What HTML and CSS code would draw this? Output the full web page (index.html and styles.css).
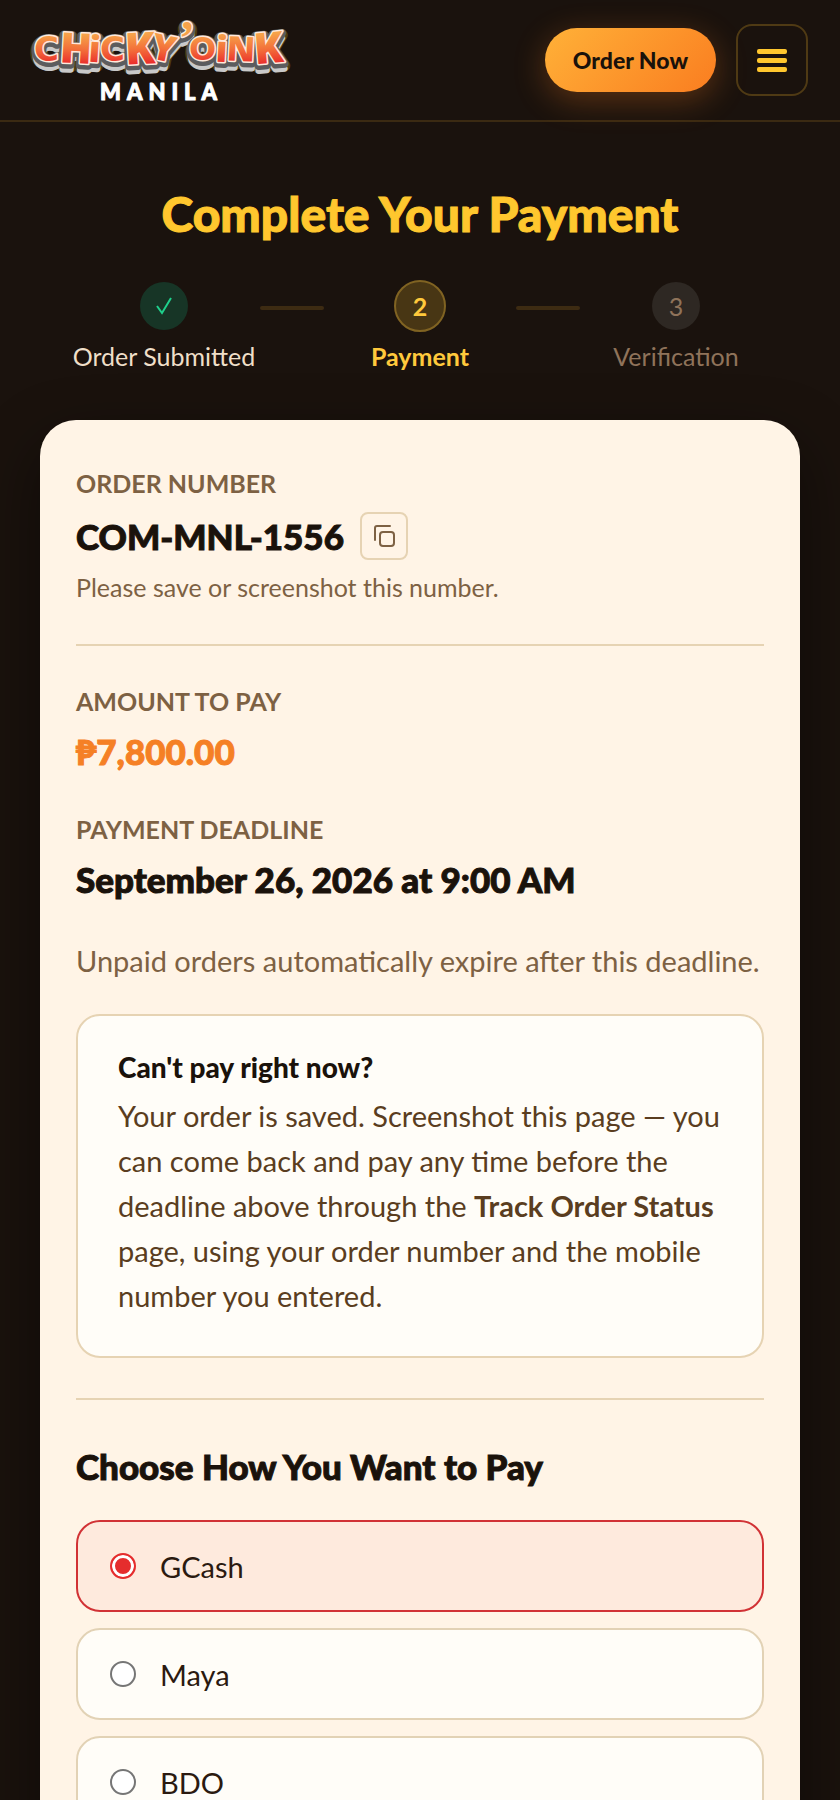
FILE: index.html
```
<!DOCTYPE html>
<html lang="en">
<head>
    <meta charset="UTF-8">
    <meta name="viewport" content="width=device-width, initial-scale=1.0">
    <title>Complete Your Payment - Chicky'Oink Manila</title>
    <link rel="stylesheet" href="styles.css">
</head>
<body>
    <header class="site-header">
        <a class="logo" href="#" aria-label="Chicky'Oink Manila">
            <svg width="256" height="80" viewBox="0 0 256 80">
                <defs>
                    <linearGradient id="flame" x1="0" y1="14" x2="0" y2="44" gradientUnits="userSpaceOnUse">
                        <stop offset="0" stop-color="#f6a34a"/>
                        <stop offset="0.5" stop-color="#f3703a"/>
                        <stop offset="1" stop-color="#ea2c2b"/>
                    </linearGradient>
                    <g id="wordmark">
                        <text class="round" x="2" y="41" font-size="34">C</text>
                        <text x="28" y="43" font-size="42" transform="rotate(3 42 28)">H</text>
                        <text x="57" y="42" font-size="36" transform="rotate(4 62 28)">i</text>
                        <text class="round" x="68" y="41" font-size="34">C</text>
                        <text x="93" y="44" font-size="44" transform="rotate(-3 108 28)">K</text>
                        <text x="120" y="41" font-size="36" transform="rotate(12 133 28)">Y</text>
                        <text class="tick" x="147" y="34" font-size="48">’</text>
                        <text class="round" x="157" y="40" font-size="32">O</text>
                        <text x="184" y="42" font-size="36" transform="rotate(3 191 28)">i</text>
                        <text x="195" y="41" font-size="34" transform="rotate(3 208 28)">N</text>
                        <text x="222" y="43" font-size="43" transform="rotate(-5 236 28)">K</text>
                    </g>
                </defs>
                <use class="logo-glow" href="#wordmark" y="4"/>
                <use class="logo-depth" href="#wordmark" y="7"/>
                <use class="logo-edge" href="#wordmark" y="2"/>
                <use class="logo-rim" href="#wordmark"/>
                <use class="logo-fill" href="#wordmark"/>
                <text class="logo-city" x="68" y="80">MANILA</text>
            </svg>
        </a>
        <div class="header-actions">
            <a class="order-btn" href="#">Order Now</a>
            <button class="menu-btn" type="button" aria-label="Open menu">
                <span></span>
                <span></span>
                <span></span>
            </button>
        </div>
    </header>

    <main class="page">
        <h1 class="page-title">Complete Your Payment</h1>

        <ol class="steps">
            <li class="step done">
                <span class="step-dot">
                    <svg width="24" height="24" viewBox="0 0 24 24"><path d="M5 12l5 7L19 4"/></svg>
                </span>
                <span class="step-label">Order Submitted</span>
            </li>
            <li class="step-line" aria-hidden="true"></li>
            <li class="step active" aria-current="step">
                <span class="step-dot">2</span>
                <span class="step-label">Payment</span>
            </li>
            <li class="step-line" aria-hidden="true"></li>
            <li class="step">
                <span class="step-dot">3</span>
                <span class="step-label">Verification</span>
            </li>
        </ol>

        <section class="card">
            <p class="label">ORDER NUMBER</p>
            <div class="order-row">
                <strong class="order-number">COM-MNL-1556</strong>
                <button class="copy-btn" type="button" aria-label="Copy order number">
                    <svg width="24" height="24" viewBox="0 0 24 24">
                        <rect x="8" y="8" width="14" height="14" rx="3"/>
                        <path d="M3 16V4a2 2 0 0 1 2-2h13"/>
                    </svg>
                </button>
            </div>
            <p class="caption">Please save or screenshot this number.</p>

            <hr class="divider">

            <div class="detail">
                <p class="label">AMOUNT TO PAY</p>
                <p class="value amount">₱7,800.00</p>
            </div>
            <div class="detail">
                <p class="label">PAYMENT DEADLINE</p>
                <p class="value">September 26, 2026 at 9:00 AM</p>
            </div>
            <p class="expiry">Unpaid orders automatically expire after this deadline.</p>

            <div class="notice">
                <h2 class="notice-title">Can't pay right now?</h2>
                <p>Your order is saved. Screenshot this page — you can come back and pay any time before the deadline above through the <strong>Track Order Status</strong> page, using your order number and the mobile number you entered.</p>
            </div>

            <hr class="divider">

            <h2 class="section-title" id="methods">Choose How You Want to Pay</h2>
            <div class="methods" role="radiogroup" aria-labelledby="methods">
                <label class="method selected">
                    <input type="radio" name="method" value="gcash" checked>
                    <span>GCash</span>
                </label>
                <label class="method">
                    <input type="radio" name="method" value="maya">
                    <span>Maya</span>
                </label>
                <label class="method">
                    <input type="radio" name="method" value="bdo">
                    <span>BDO</span>
                </label>
            </div>
        </section>
    </main>
</body>
</html>
```

FILE: styles.css
```
* {
    box-sizing: border-box;
}
body {
    display: flex;
    flex-direction: column;
    height: 100vh;
    margin: 0;
    background-color: #1a120d;
    color: #1a120b;
    font-family: Lato, "Noto Sans", sans-serif;
    font-size: 29px;
    line-height: 45px;
}
h1, h2, p, ol {
    margin: 0;
    padding: 0;
}

/* Header */
.site-header {
    display: flex;
    flex-shrink: 0;
    align-items: center;
    justify-content: space-between;
    padding: 20px 32px;
    border-bottom: 2px solid #3b2a12;
}
.logo {
    display: flex;
    text-decoration: none;
}
.logo svg {
    overflow: visible;
    font-family: "Open Sans", sans-serif;
    font-weight: 800;
    stroke-linejoin: round;
}
.logo .round {
    font-family: "DejaVu Sans", sans-serif;
}
.logo .tick {
    font-family: "Liberation Serif", serif;
}
.logo-glow {
    fill: #4d3d12;
    stroke: #4d3d12;
    stroke-width: 11px;
}
.logo-depth {
    fill: #c9c9c9;
    stroke: #c9c9c9;
    stroke-width: 6px;
}
.logo-edge {
    fill: #5c5c5e;
    stroke: #5c5c5e;
    stroke-width: 8px;
}
.logo-rim {
    fill: #ffe9dc;
    stroke: #ffe9dc;
    stroke-width: 3px;
}
.logo-fill {
    fill: url(#flame);
}
.logo-city {
    fill: #ffffff;
    stroke: #ffffff;
    stroke-width: 1px;
    font-family: Lato, sans-serif;
    font-size: 22px;
    font-weight: 900;
    letter-spacing: 6px;
}
.header-actions {
    display: flex;
    align-items: center;
    gap: 20px;
}
.order-btn {
    padding: 0 28px;
    border-radius: 32px;
    background: linear-gradient(135deg, #ffb138, #fa7d20);
    box-shadow: 0 8px 32px rgba(249, 125, 32, 0.3);
    color: #1a120b;
    font-size: 23px;
    font-weight: 900;
    line-height: 64px;
    text-decoration: none;
}
.menu-btn {
    display: flex;
    flex-direction: column;
    align-items: center;
    justify-content: center;
    gap: 4px;
    width: 72px;
    height: 72px;
    padding: 0;
    border: 2px solid #4f3a14;
    border-radius: 16px;
    background: none;
    cursor: pointer;
}
.menu-btn span {
    width: 30px;
    height: 5px;
    border-radius: 2px;
    background-color: #ffc72e;
}

/* Page */
.page {
    flex: 1;
    min-height: 0;
    padding: 60px 40px;
    overflow-y: auto;
    scrollbar-width: none;
}
.page-title {
    color: #ffc72e;
    font-size: 48px;
    font-weight: 900;
    line-height: 64px;
    text-align: center;
}
.page-title, .order-number, .value, .section-title {
    -webkit-text-stroke: 1px currentColor;
}

/* Progress steps */
.steps {
    display: flex;
    margin: 34px 28px 44px;
    list-style: none;
}
.step {
    display: flex;
    flex: 1;
    flex-direction: column;
    align-items: center;
    gap: 4px;
    color: #8f735a;
    font-size: 25px;
    line-height: 40px;
}
.step-dot {
    display: flex;
    align-items: center;
    justify-content: center;
    width: 48px;
    height: 48px;
    margin: 2px;
    border-radius: 50%;
    background-color: #2e2823;
}
.step-dot svg {
    fill: none;
    stroke: #1fd08c;
    stroke-width: 2px;
}
.step-label {
    white-space: nowrap;
}
.step.done {
    color: #efdfc8;
}
.step.done .step-dot {
    background-color: #173526;
}
.step.active {
    color: #ffc93c;
    font-weight: 700;
}
.step.active .step-dot {
    width: 52px;
    height: 52px;
    margin: 0;
    border: 2px solid #806322;
    background-color: #483614;
}
.step-line {
    width: 64px;
    height: 4px;
    margin-top: 26px;
    border-radius: 2px;
    background-color: #3d2b12;
}

/* Order card */
.card {
    padding: 44px 36px;
    border-radius: 36px;
    background-color: #fff4e6;
    box-shadow: 0 24px 64px rgba(0, 0, 0, 0.45);
}
.label {
    color: #7d6143;
    font-size: 25px;
    font-weight: 700;
    line-height: 38px;
}
.order-row {
    display: flex;
    align-items: center;
    gap: 16px;
    margin: 10px 0 8px;
}
.order-number {
    font-size: 35px;
    font-weight: 900;
    line-height: 46px;
}
.copy-btn {
    display: flex;
    align-items: center;
    justify-content: center;
    width: 48px;
    height: 48px;
    padding: 0;
    border: 2px solid #e6d3b3;
    border-radius: 8px;
    background: none;
    cursor: pointer;
}
.copy-btn svg {
    fill: none;
    stroke: #7d6143;
    stroke-width: 2px;
    stroke-linecap: round;
}
.caption {
    color: #7d6143;
    font-size: 25px;
    line-height: 38px;
}
.divider {
    height: 2px;
    margin: 38px 0 36px;
    border: none;
    background-color: #e6d3b3;
}
.detail {
    margin-bottom: 36px;
}
.value {
    margin-top: 8px;
    font-size: 35px;
    font-weight: 900;
    line-height: 46px;
}
.amount {
    color: #f58025;
}
.expiry {
    color: #7d6143;
}
.notice {
    margin: 31px 0 40px;
    padding: 32px 40px 38px;
    border: 2px solid #e6d3b3;
    border-radius: 24px;
    background-color: #fffdf8;
    color: #5a3d20;
}
.notice-title {
    margin-bottom: 7px;
    color: #1a120b;
    font-size: 28px;
    font-weight: 900;
    line-height: 38px;
}
.section-title {
    margin: 40px 0 28px;
    font-size: 35px;
    font-weight: 900;
    line-height: 52px;
}

/* Payment methods */
.methods {
    display: grid;
    gap: 16px;
}
.method {
    display: flex;
    align-items: center;
    gap: 24px;
    height: 92px;
    padding: 0 32px;
    border: 2px solid #e2d2b5;
    border-radius: 24px;
    background-color: #fffdf8;
    color: #2b1a10;
    cursor: pointer;
}
.method.selected {
    border-color: #d13235;
    background-color: #feeadd;
}
.method input {
    appearance: none;
    width: 26px;
    height: 26px;
    margin: 0;
    border: 2px solid #767676;
    border-radius: 50%;
    background-color: #ffffff;
}
.method input:checked {
    border-color: #e52d2d;
    background-color: #e52d2d;
    box-shadow: inset 0 0 0 3px #ffffff;
}
```
